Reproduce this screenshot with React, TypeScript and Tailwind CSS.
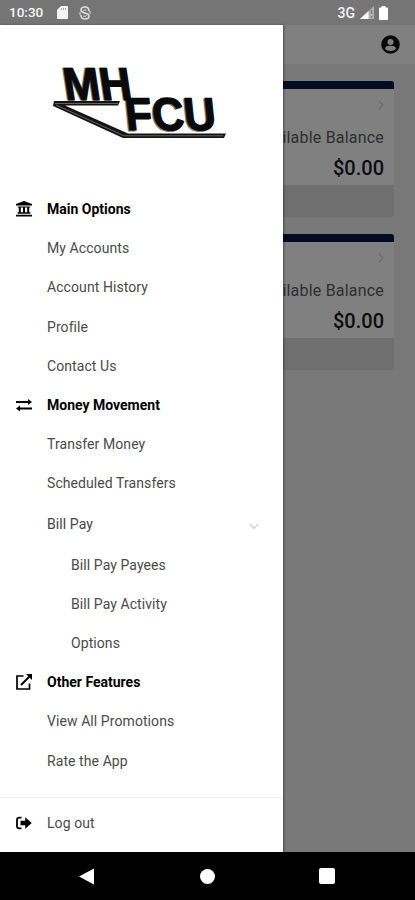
import { FC, ReactNode } from 'react';

/**
 * Interface representing a single entry of the drawer menu.
 */
interface MenuItem {
  name: string; // Label of the entry
  type: 'heading' | 'link' | 'toggle' | 'sub'; // How the entry is drawn
  icon?: ReactNode; // Icon for headings
}

const BankIcon: FC = () => (
  <svg className="h-4 w-4" viewBox="0 0 16 16" fill="currentColor">
    <path d="M8 0 16 3v1.4H0V3z" />
    <path d="M1.8 5.4h12.4v1H1.8zM2.8 6h2v5.5h-2zM7 6h2v5.5H7zM11.2 6h2v5.5h-2zM1.6 11.2h12.8v1.6H1.6zM0 13.7h16v1.8H0z" />
  </svg>
);

const SwapIcon: FC = () => (
  <svg className="h-4 w-4" viewBox="0 0 16 16" fill="currentColor">
    <path d="M0 4h12V2l4 3-4 3V6H0zM16 10.5H4v-2l-4 3 4 3v-2h12z" />
  </svg>
);

const ExternalIcon: FC = () => (
  <svg className="h-4 w-4" viewBox="0 0 16 16" fill="none" stroke="currentColor" strokeWidth="1.7">
    <path d="M7.5 2H1v13h12.5V9.5" />
    <path d="M5 11 13.5 2.5" strokeWidth="2" />
    <path d="M10 0h6v6z" fill="currentColor" stroke="none" />
  </svg>
);

const LogoutIcon: FC = () => (
  <svg className="h-4 w-4" viewBox="0 0 16 16" fill="currentColor">
    <path d="M5.5 2.7H3.2Q1 2.7 1 5v6q0 2.3 2.2 2.3h2.3" fill="none" stroke="currentColor" strokeWidth="1.8" />
    <path d="M4.5 5.8h4.7V2.3L15.8 8l-6.6 5.7v-3.5H4.5z" />
  </svg>
);

const menu: MenuItem[] = [
  { name: 'Main Options', type: 'heading', icon: <BankIcon /> },
  { name: 'My Accounts', type: 'link' },
  { name: 'Account History', type: 'link' },
  { name: 'Profile', type: 'link' },
  { name: 'Contact Us', type: 'link' },
  { name: 'Money Movement', type: 'heading', icon: <SwapIcon /> },
  { name: 'Transfer Money', type: 'link' },
  { name: 'Scheduled Transfers', type: 'link' },
  { name: 'Bill Pay', type: 'toggle' },
  { name: 'Bill Pay Payees', type: 'sub' },
  { name: 'Bill Pay Activity', type: 'sub' },
  { name: 'Options', type: 'sub' },
  { name: 'Other Features', type: 'heading', icon: <ExternalIcon /> },
  { name: 'View All Promotions', type: 'link' },
  { name: 'Rate the App', type: 'link' },
];

/**
 * Credit union logo, two slanted words joined by a double rule.
 */
const Logo: FC = () => (
  <svg className="h-[95px] w-[200px]" viewBox="0 0 200 95" fontFamily="Liberation Sans, Arial, sans-serif" fontWeight="bold">
    <path d="M14 46H80L78 50.5H25L88 78.5H186L184 83H83L13 51z" fill="#151515" />
    <path d="M15 48.5H78M16 50 84 80.8H183" fill="none" stroke="#777" strokeWidth="0.8" />
    <g fontSize="46" fill="#777" stroke="#777" strokeWidth="1">
      <text transform="translate(24.5 45) skewX(8.5) scale(0.95 1)">MH</text>
      <text transform="translate(85.5 75.5) skewX(6) scale(0.96 1)">FCU</text>
    </g>
    <g fontSize="46" fill="#0a0a0a" stroke="#0a0a0a" strokeWidth="1.2">
      <text transform="translate(25.7 44.5) skewX(8.5) scale(0.95 1)">MH</text>
      <text transform="translate(86.7 75) skewX(6) scale(0.96 1)">FCU</text>
    </g>
  </svg>
);

const StatusBar: FC = () => (
  <header className="flex h-[25px] items-center bg-[#757575] pl-[9px] pr-[27px] text-[#f4f4f4]">
    <span className="w-[48px] text-[13.5px] font-medium leading-none">10:30</span>
    <svg className="h-[13px] w-[11px]" viewBox="0 0 11 13" fill="currentColor">
      <path d="M4 0h6q1 0 1 1v11q0 1-1 1H1q-1 0-1-1V4z" />
      <path d="M4.5 2v2M6.5 2v2M8.5 2v2" stroke="#999" strokeWidth="0.8" />
    </svg>
    <svg className="ml-[11px] h-[14px] w-[12px]" viewBox="0 0 12 14" fill="none" stroke="#dedede" strokeWidth="1.6">
      <path d="M10 5.2Q10 1 6 1T2 4.2Q2 6 6 7t4 3q0 3-4 3T2 9" />
      <path d="M4.5 5q0-1.5 3-1M7.5 9.2q0 1.6-3 1M1 6v3M11 5v3" strokeWidth="1" />
    </svg>
    <span className="ml-auto text-[14px] font-medium leading-none">3G</span>
    <svg className="ml-[5px] h-[13px] w-[14px]" viewBox="0 0 14 13">
      <path d="M14 0v13H0z" fill="#b0b0b0" />
      <path d="M8.5 5v8H0z" fill="#fff" />
      <path d="M11.5 4v4M11.5 10v2" stroke="#777" strokeWidth="1.3" />
    </svg>
    <svg className="ml-[5px] h-[14px] w-[9px]" viewBox="0 0 9 14" fill="#fff">
      <path d="M2.5 0h4v1.5H8q1 0 1 1V13q0 1-1 1H1q-1 0-1-1V2.5q0-1 1-1h1.5z" />
    </svg>
  </header>
);

/**
 * Account card behind the drawer.
 */
const AccountCard: FC = () => (
  <section className="flex h-[136px] flex-col overflow-hidden rounded-[3px] bg-[#6f6f6f]">
    <div className="h-2 bg-[#020c24]" />
    <div className="flex h-[96px] flex-col items-end bg-[#808080] pr-[10px]">
      <svg className="mt-[10px] h-[12px] w-[6px]" viewBox="0 0 6 12" fill="none" stroke="#6a6a6a" strokeWidth="1.2">
        <path d="m.8 1.5 4 4.5-4 4.5" />
      </svg>
      <span className="mt-[17px] text-[16px] leading-5 tracking-[0.2px] text-[#2e2e2e]">Available Balance</span>
      <span className="mt-[8px] text-[20px] font-medium leading-6 text-[#0d0d0d]">$0.00</span>
    </div>
  </section>
);

/**
 * Single row of the drawer menu.
 */
const MenuRow: FC<{ item: MenuItem }> = ({ item }) => {
  if (item.type === 'heading') {
    return (
      <li className="flex h-[39.2px] items-center pl-4 text-black">
        <span className="w-[31px]">{item.icon}</span>
        <span className="font-bold tracking-normal">{item.name}</span>
      </li>
    );
  }

  if (item.type === 'toggle') {
    return (
      <li className="flex h-[42px] items-center justify-between pl-[47px] pr-6 text-[#444]">
        <span>{item.name}</span>
        <svg className="mt-1 h-[7px] w-[10px]" viewBox="0 0 10 7" fill="none" stroke="#d8d8d8" strokeWidth="1.7">
          <path d="m.8 1 4.2 4.2L9.2 1" />
        </svg>
      </li>
    );
  }

  return (
    <li className={`flex h-[39.2px] items-center pt-px text-[#4a4a4a] ${item.type === 'sub' ? 'pl-[71px]' : 'pl-[47px]'}`}>
      {item.name}
    </li>
  );
};

const Drawer: FC = () => (
  <aside className="absolute bottom-12 left-0 top-[25px] flex w-[283px] flex-col bg-white shadow-[1px_0_2px_rgba(0,0,0,0.4)]">
    <div className="h-[164.5px] pl-10 pt-[30px]">
      <Logo />
    </div>
    <ul className="flex-1 text-[14px] tracking-[0.08px]">
      {menu.map((item) => (
        <MenuRow key={item.name} item={item} />
      ))}
    </ul>
    <div className="flex h-[55px] items-center border-t border-[#ececec] pb-1 pl-4 text-[14px] tracking-[0.08px]">
      <span className="w-[31px] text-black"><LogoutIcon /></span>
      <span className="text-[#4a4a4a]">Log out</span>
    </div>
  </aside>
);

const App: FC = () => {
  return (
    <div className="relative flex h-[900px] w-[415px] flex-col overflow-hidden bg-[#797979] font-[Roboto,sans-serif]">
      <StatusBar />
      <div className="flex h-[39px] items-center justify-end bg-[#808080] pr-[15px]">
        <svg className="h-[19px] w-[19px]" viewBox="0 0 19 19">
          <circle cx="9.5" cy="9.5" r="9.3" fill="#080808" />
          <circle cx="9.5" cy="7" r="3" fill="#808080" />
          <path d="M4 14q0-3.2 5.5-3.2T15 14q-2 2-5.5 2T4 14z" fill="#808080" />
        </svg>
      </div>
      <main className="flex flex-1 flex-col gap-[17px] pl-5 pr-[21px] pt-[17px]">
        <AccountCard />
        <AccountCard />
      </main>
      <Drawer />
      <nav className="flex h-12 items-center bg-black pl-[79px]">
        <svg className="h-[17px] w-[16px]" viewBox="0 0 16 17" fill="#fff">
          <path d="M15 .5v16L0 8.5z" />
        </svg>
        <span className="ml-[105px] h-[15px] w-[15px] rounded-full bg-white" />
        <span className="ml-[104px] h-4 w-4 rounded-[2px] bg-white" />
      </nav>
    </div>
  );
};

export default App;
